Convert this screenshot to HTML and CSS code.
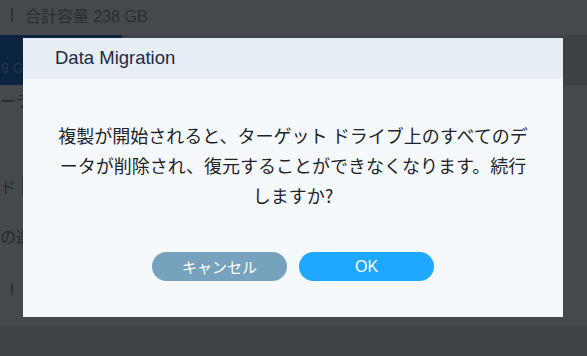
FILE: index.html
```html
<!DOCTYPE html>
<html lang="ja">
<head>
<meta charset="utf-8">
<title>Data Migration</title>
<link rel="stylesheet" href="styles.css">
</head>
<body>
<div class="page">
  <div class="topbar">
    <span class="vbar"></span>
    <span class="total">合計容量 238 GB</span>
  </div>
  <div class="band">
    <div class="disk"><span class="disk-size">9 GB</span></div>
  </div>
  <div class="content">
    <div class="row row-a">ーティ</div>
    <div class="row row-b"><span>ド</span><span class="vbar"></span></div>
    <div class="row row-c">の選択</div>
    <div class="row row-d"><span class="vbar short"></span></div>
  </div>
  <div class="footer"></div>
</div>

<div class="modal">
  <div class="modal-head">Data Migration</div>
  <div class="modal-body">
    <p class="message">複製が開始されると、ターゲット ドライブ上のすべてのデータが削除され、復元することができなくなります。続行しますか?</p>
    <div class="actions">
      <button class="btn btn-cancel">キャンセル</button>
      <button class="btn btn-ok">OK</button>
    </div>
  </div>
</div>
</body>
</html>
```

FILE: styles.css
```css
* { box-sizing: border-box; }
html, body {
  margin: 0;
  padding: 0;
  width: 587px;
  height: 356px;
  overflow: hidden;
  background: #45494c;
  font-family: "Liberation Sans", "Noto Sans CJK JP", sans-serif;
}
.page {
  display: flex;
  flex-direction: column;
  height: 356px;
}
.topbar {
  height: 35px;
  display: flex;
  align-items: center;
  gap: 12px;
  padding-left: 11px;
  padding-bottom: 6px;
  color: #2a2e32;
  font-size: 16px;
}
.vbar {
  display: inline-block;
  width: 2px;
  height: 14px;
  background: #2e3236;
}
.band {
  height: 50px;
  background: #3e4246;
  display: flex;
}
.disk {
  width: 122px;
  background: #0b2541;
  display: flex;
  align-items: flex-end;
  padding-bottom: 9px;
}
.disk-size {
  color: #273447;
  font-size: 14px;
  margin-left: 1px;
}
.content {
  flex: 1;
  display: flex;
  flex-direction: column;
  color: #25292d;
  font-size: 16px;
}
.row { display: flex; align-items: center; }
.row-a { height: 30px; }
.row-b { height: 26px; margin-top: 58px; }
.row-b .vbar { height: 18px; margin-left: 6px; }
.row-c { height: 26px; margin-top: 24px; }
.row-d { height: 24px; margin-top: 28px; padding-left: 11px; }
.vbar.short { height: 12px; }
.footer {
  height: 30px;
  background: #3f4347;
}

.modal {
  position: absolute;
  left: 23px;
  top: 38px;
  width: 540px;
  height: 279px;
  background: #f5f9fc;
  display: flex;
  flex-direction: column;
}
.modal-head {
  height: 41px;
  background: #e6edf5;
  color: #1d2a42;
  font-size: 18.5px;
  padding-left: 32px;
  display: flex;
  align-items: center;
  padding-bottom: 1px;
}
.modal-body {
  flex: 1;
  display: flex;
  flex-direction: column;
  align-items: center;
  padding: 41px 30px 0;
}
.message {
  margin: 0;
  width: 480px;
  text-align: center;
  font-family: "Noto Sans CJK JP", sans-serif;
  font-size: 18px;
  line-height: 30px;
  color: #1f2428;
}
.actions {
  margin-top: 42px;
  display: flex;
  gap: 12px;
}
.btn {
  width: 135px;
  height: 29px;
  border: none;
  border-radius: 15px;
  color: #ffffff;
  font-family: "Liberation Sans", "Noto Sans CJK JP", sans-serif;
  font-size: 15px;
  padding: 0;
  display: flex;
  align-items: center;
  justify-content: center;
}
.btn-cancel { background: #77a2bd; }
.btn-ok { background: #1fa8ff; font-size: 16px; }
```
